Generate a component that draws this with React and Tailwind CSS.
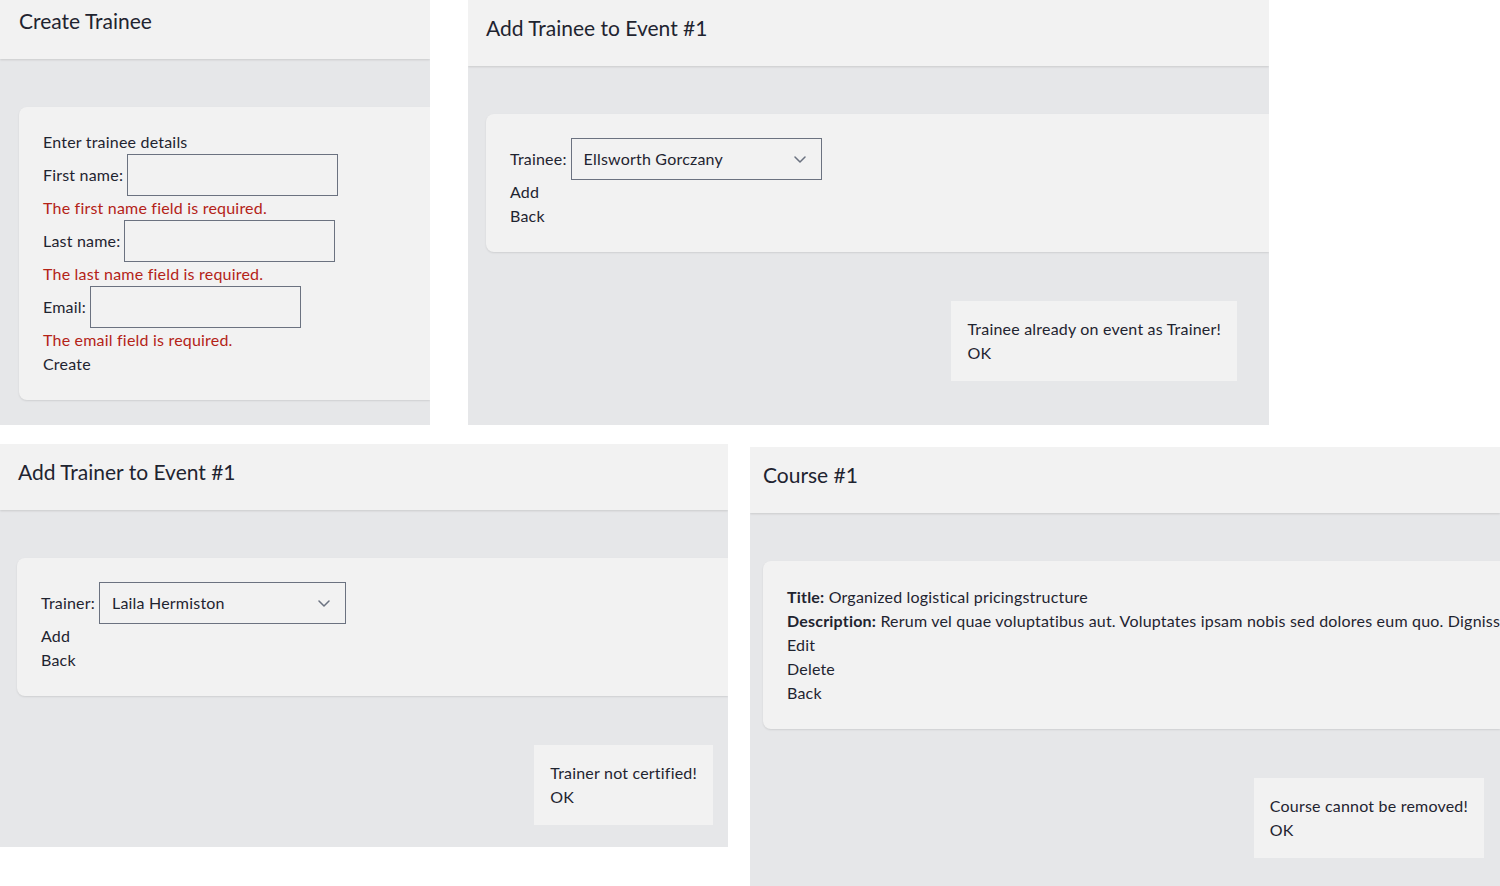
const font = { fontFamily: "Lato, 'Noto Sans', sans-serif" };

function Header({ title, height = "h-[66px]", top = "pt-[14px]", left = "pl-[18px]" }) {
  return (
    <div
      className={`${height} ${top} ${left} bg-[#f2f2f2] shadow-[0_1px_2px_rgba(0,0,0,0.12)] relative z-10 shrink-0`}
    >
      <h2 className="text-[21px] leading-7 tracking-normal text-[#1f2430]">{title}</h2>
    </div>
  );
}

function Card({ left, children }) {
  return (
    <div
      className={`${left} bg-[#f2f2f2] rounded-l-lg shadow-[0_1px_2px_rgba(0,0,0,0.1)] p-6 overflow-hidden`}
    >
      {children}
    </div>
  );
}

function Alert({ text, right }) {
  return (
    <div className={`flex justify-end ${right} mt-[49px]`}>
      <div className="bg-[#f2f2f2] px-4 py-4 leading-6">
        <p>{text}</p>
        <p>OK</p>
      </div>
    </div>
  );
}

function Field({ label, width, error }) {
  return (
    <>
      <div className="flex items-center gap-1">
        <span>{label}</span>
        <div className={`${width} h-[42px] border border-[#6b7280] bg-[#f2f2f2]`} />
      </div>
      <p className="text-[#b42318]">{error}</p>
    </>
  );
}

function SelectBox({ value, width }) {
  return (
    <div
      className={`${width} h-[42px] border border-[#6b7280] flex items-center justify-between pl-3 pr-[15px]`}
    >
      <span>{value}</span>
      <svg width="12" height="7" viewBox="0 0 12 7" fill="none">
        <path
          d="M1 1l5 5 5-5"
          stroke="#6b7280"
          strokeWidth="1.5"
          strokeLinecap="round"
          strokeLinejoin="round"
        />
      </svg>
    </div>
  );
}

export default function App() {
  return (
    <div
      className="w-[1500px] h-[886px] bg-white overflow-hidden text-[16px] leading-6 tracking-[0.2px] text-[#1f2430]"
      style={font}
    >
      <div className="flex gap-[38px]">
        {/* Create Trainee */}
        <div className="w-[430px] h-[425px] bg-[#e6e7e9] flex flex-col overflow-hidden">
          <Header title="Create Trainee" height="h-[59px]" top="pt-[7px]" left="pl-[19px]" />
          <div className="pt-[48px]">
            <Card left="ml-[19px]">
              <p className="-mt-px">Enter trainee details</p>
              <Field label="First name:" width="w-[211px]" error="The first name field is required." />
              <Field label="Last name:" width="w-[211px]" error="The last name field is required." />
              <Field label="Email:" width="w-[211px]" error="The email field is required." />
              <p>Create</p>
            </Card>
          </div>
        </div>

        {/* Add Trainee to Event */}
        <div className="w-[801px] h-[425px] bg-[#e6e7e9] flex flex-col overflow-hidden">
          <Header title="Add Trainee to Event #1" />
          <div className="pt-[48px]">
            <Card left="ml-[18px]">
              <div className="flex items-center gap-1">
                <span>Trainee:</span>
                <SelectBox value="Ellsworth Gorczany" width="w-[251px]" />
              </div>
              <p>Add</p>
              <p>Back</p>
            </Card>
            <Alert text="Trainee already on event as Trainer!" right="mr-[32px]" />
          </div>
        </div>
      </div>

      <div className="flex items-start gap-[22px] mt-[19px]">
        {/* Add Trainer to Event */}
        <div className="w-[728px] h-[403px] bg-[#e6e7e9] flex flex-col overflow-hidden">
          <Header title="Add Trainer to Event #1" />
          <div className="pt-[48px]">
            <Card left="ml-[17px]">
              <div className="flex items-center gap-1">
                <span>Trainer:</span>
                <SelectBox value="Laila Hermiston" width="w-[247px]" />
              </div>
              <p>Add</p>
              <p>Back</p>
            </Card>
            <Alert text="Trainer not certified!" right="mr-[15px]" />
          </div>
        </div>

        {/* Course */}
        <div className="w-[750px] h-[439px] mt-[3px] bg-[#e6e7e9] flex flex-col overflow-hidden">
          <Header title="Course #1" left="pl-[13px]" />
          <div className="pt-[48px]">
            <Card left="ml-[13px]">
              <p className="whitespace-nowrap">
                <span className="font-bold">Title:</span> Organized logistical pricingstructure
              </p>
              <p className="whitespace-nowrap">
                <span className="font-bold">Description:</span> Rerum vel quae voluptatibus aut.
                Voluptates ipsam nobis sed dolores eum quo. Dignissimos et ut quia voluptas.
              </p>
              <p>Edit</p>
              <p>Delete</p>
              <p>Back</p>
            </Card>
            <Alert text="Course cannot be removed!" right="mr-[16px]" />
          </div>
        </div>
      </div>
    </div>
  );
}
